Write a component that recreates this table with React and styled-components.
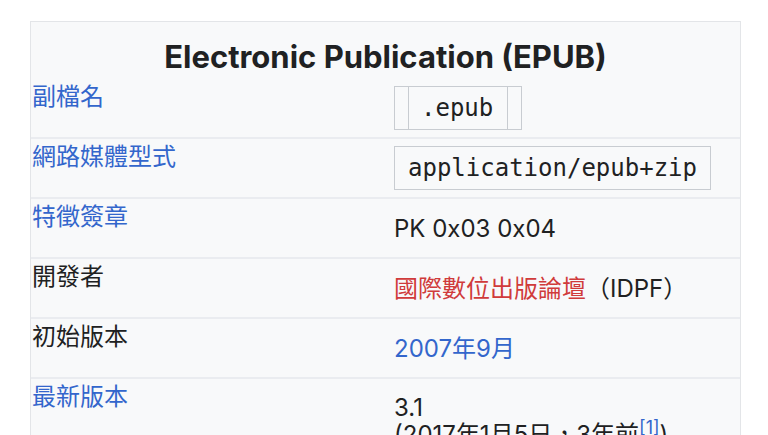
import React from "react";
import styled, { createGlobalStyle } from "styled-components";

const Global = createGlobalStyle`
  html, body {
    margin: 0;
    padding: 0;
    background: #fff;
  }
  body {
    font-family: Inter, "Noto Sans CJK TC", sans-serif;
    color: #202122;
  }
`;

const Page = styled.div`
  padding: 21px 0 0 30px;
  width: 711px;
  height: 435px;
  overflow: hidden;
`;

const Infobox = styled.div`
  background: #f8f9fa;
  border: 1px solid #e3e5e8;
  border-bottom: none;
`;

const Title = styled.div`
  font-size: 31px;
  line-height: 38px;
  font-weight: 700;
  text-align: center;
  padding: 16px 0 3px;
  color: #202122;
`;

const Row = styled.div`
  display: grid;
  grid-template-columns: 363px 1fr;
  min-height: 58px;
  border-top: ${(p) => (p.$first ? "none" : "2px solid #eaecf0")};
`;

const Label = styled.div`
  align-self: start;
  padding: 4px 0 0 1px;
  font-size: 24px;
  line-height: 28px;
  color: ${(p) => (p.$link ? "#3366cc" : "#202122")};
`;

const Value = styled.div`
  align-self: center;
  padding: ${(p) => (p.$code ? "7px 0" : "15px 0")};
  font-size: 24px;
  line-height: 27px;
`;

const Link = styled.span`
  color: ${(p) => (p.$red ? "#d03b3b" : "#3366cc")};
`;

const Code = styled.code`
  display: inline-block;
  font-family: "DejaVu Sans Mono", monospace;
  font-size: 24px;
  line-height: 42px;
  padding: 0 13px;
  border: 1px solid #c8ccd1;
  background: #f8f9fa;
  color: #202122;
`;

const Hlist = styled.div`
  display: inline-flex;
  padding: 0 13px;
  border: 1px solid #c8ccd1;
`;

const HlistItem = styled.code`
  font-family: "DejaVu Sans Mono", monospace;
  font-size: 24px;
  line-height: 42px;
  padding: 0 14px 0 12px;
  border-left: 1px solid #c8ccd1;
  border-right: 1px solid #c8ccd1;
  color: #202122;
`;

const Sup = styled.sup`
  font-size: 0.75em;
  line-height: 0;
  color: #3366cc;
`;

const rows = [
  { label: "副檔名", link: true, code: true, value: <Hlist><HlistItem>.epub</HlistItem></Hlist> },
  { label: "網路媒體型式", link: true, code: true, value: <Code>application/epub+zip</Code> },
  { label: "特徵簽章", link: true, value: "PK 0x03 0x04" },
  {
    label: "開發者",
    value: (
      <>
        <Link $red>國際數位出版論壇</Link>（IDPF）
      </>
    ),
  },
  { label: "初始版本", value: <Link>2007年9月</Link> },
  {
    label: "最新版本",
    link: true,
    value: (
      <>
        3.1
        <br />
        (2017年1月5日，3年前<Sup>[1]</Sup>)
      </>
    ),
  },
];

export default function App() {
  return (
    <>
      <Global />
      <Page>
        <Infobox>
          <Title>Electronic Publication (EPUB)</Title>
          {rows.map((r, i) => (
            <Row key={r.label} $first={i === 0}>
              <Label $link={r.link}>{r.label}</Label>
              <Value $code={r.code}>{r.value}</Value>
            </Row>
          ))}
        </Infobox>
      </Page>
    </>
  );
}
